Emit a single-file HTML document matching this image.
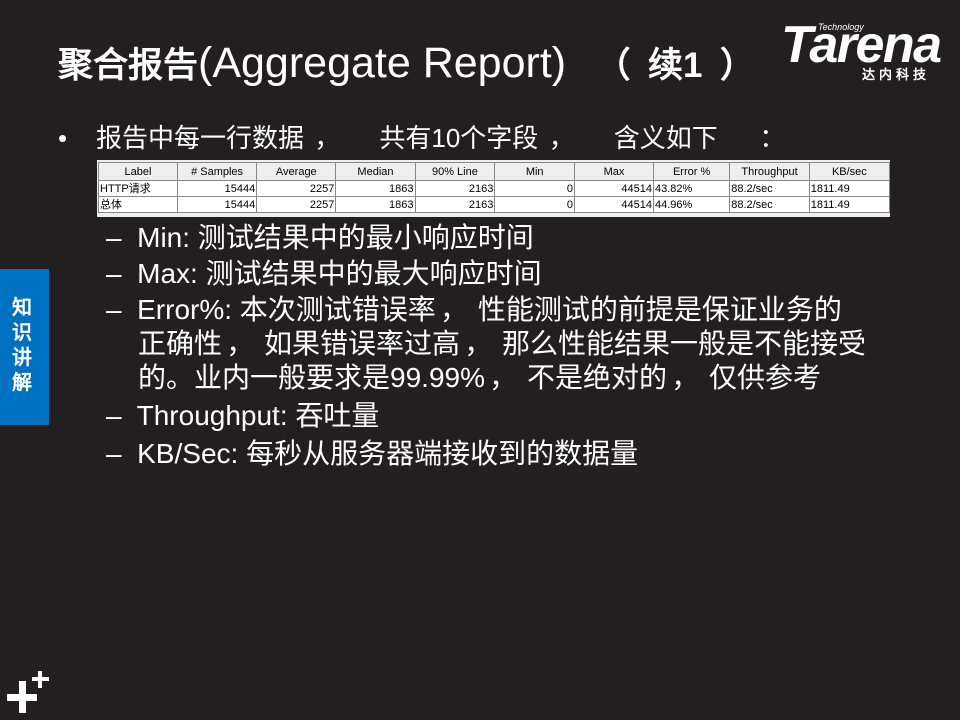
<!DOCTYPE html>
<html><head><meta charset="utf-8"><style>
body{margin:0;width:960px;height:720px;background:#231f20;position:relative;overflow:hidden;font-family:"Liberation Sans","WenQuanYi Zen Hei",sans-serif;color:#fff}
.a{position:absolute;white-space:nowrap}
h1{position:absolute;left:58px;top:37px;margin:0;font-size:43px;font-weight:normal;line-height:52px;white-space:nowrap}
h1 .c{font-size:35px;font-weight:bold}
.t{position:absolute;left:97px;top:160px;width:793px;height:57px;background:#eeeeee}
table{border-collapse:collapse;font-family:"Liberation Sans","Noto Sans CJK SC",sans-serif;font-size:11px;color:#000;position:absolute;left:1px;top:2px}
td{border:1px solid #888;height:15px;padding:0 1px;line-height:14px}
tr.h td{text-align:center;height:17px;background:#eee}
tr.r td{background:#fff;text-align:right}
td.l{text-align:left!important}
.li{font-size:28px;line-height:36px}
.p{display:inline-block;width:1.5em;text-align:left;padding-left:0.15em;box-sizing:border-box}
.q{display:inline-block;width:2.9em;text-align:left;padding-left:0.4em;box-sizing:border-box}
.p2{display:inline-block;width:1em;text-align:center}
.w{display:inline-block;width:2em;text-align:center}
</style></head><body>
<h1><span class="c">聚合报告</span>(Aggregate Report) <span class="c"><span class="w">（</span>续1<span class="w">）</span></span></h1>
<div class="a" style="left:818px;top:22px;font-size:9px;font-style:italic">Technology</div>
<div class="a" style="left:781px;top:18px;font-size:52px;font-weight:bold;font-style:italic;letter-spacing:-1.5px;line-height:54px">Tarena</div>
<div class="a" style="left:862px;top:64px;font-size:13px;font-weight:bold;letter-spacing:4px">达内科技</div>
<div class="a" style="left:58px;top:118px;font-size:26px;line-height:40px">•&nbsp;&nbsp;&nbsp; 报告中每一行数据<span class="q">，</span>共有10个字段<span class="q">，</span>含义如下<span class="q" style="padding-left:1.6em">：</span></div>
<div class="t"><table>
<tr class="h"><td style="width:77px">Label</td><td style="width:77px"># Samples</td><td style="width:77px">Average</td><td style="width:77px">Median</td><td style="width:78px">90% Line</td><td style="width:78px">Min</td><td style="width:77px">Max</td><td style="width:74px">Error %</td><td style="width:77px">Throughput</td><td style="width:78px">KB/sec</td></tr>
<tr class="r"><td class="l">HTTP请求</td><td>15444</td><td>2257</td><td>1863</td><td>2163</td><td>0</td><td>44514</td><td class="l">43.82%</td><td class="l">88.2/sec</td><td class="l">1811.49</td></tr>
<tr class="r"><td class="l">总体</td><td>15444</td><td>2257</td><td>1863</td><td>2163</td><td>0</td><td>44514</td><td class="l">44.96%</td><td class="l">88.2/sec</td><td class="l">1811.49</td></tr>
</table></div>
<div class="a li" style="left:106px;top:220px">–&nbsp; Min: 测试结果中的最小响应时间</div>
<div class="a li" style="left:106px;top:256px">–&nbsp; Max: 测试结果中的最大响应时间</div>
<div class="a li" style="left:106px;top:292px">–&nbsp; Error%: 本次测试错误率<span class="p">，</span>性能测试的前提是保证业务的</div>
<div class="a li" style="left:138px;top:326px">正确性<span class="p">，</span>如果错误率过高<span class="p">，</span>那么性能结果一般是不能接受</div>
<div class="a li" style="left:138px;top:360px">的<span class="p2">。</span>业内一般要求是99.99%<span class="p">，</span>不是绝对的<span class="p">，</span>仅供参考</div>
<div class="a li" style="left:106px;top:398px">–&nbsp; Throughput: 吞吐量</div>
<div class="a li" style="left:106px;top:436px">–&nbsp; KB/Sec: 每秒从服务器端接收到的数据量</div>
<div class="a" style="left:0;top:269px;width:49px;height:156px;background:#0070c0"></div>
<div class="a" style="left:12px;top:296px;font-size:20px;font-weight:bold;line-height:25px;white-space:normal;width:24px">知识讲解</div>
<div class="a" style="left:7px;top:694px;width:30px;height:7px;background:#fff"></div>
<div class="a" style="left:19px;top:681px;width:7px;height:32px;background:#fff"></div>
<div class="a" style="left:32px;top:677px;width:17px;height:4px;background:#fff"></div>
<div class="a" style="left:38px;top:671px;width:4px;height:17px;background:#fff"></div>
</body></html>
